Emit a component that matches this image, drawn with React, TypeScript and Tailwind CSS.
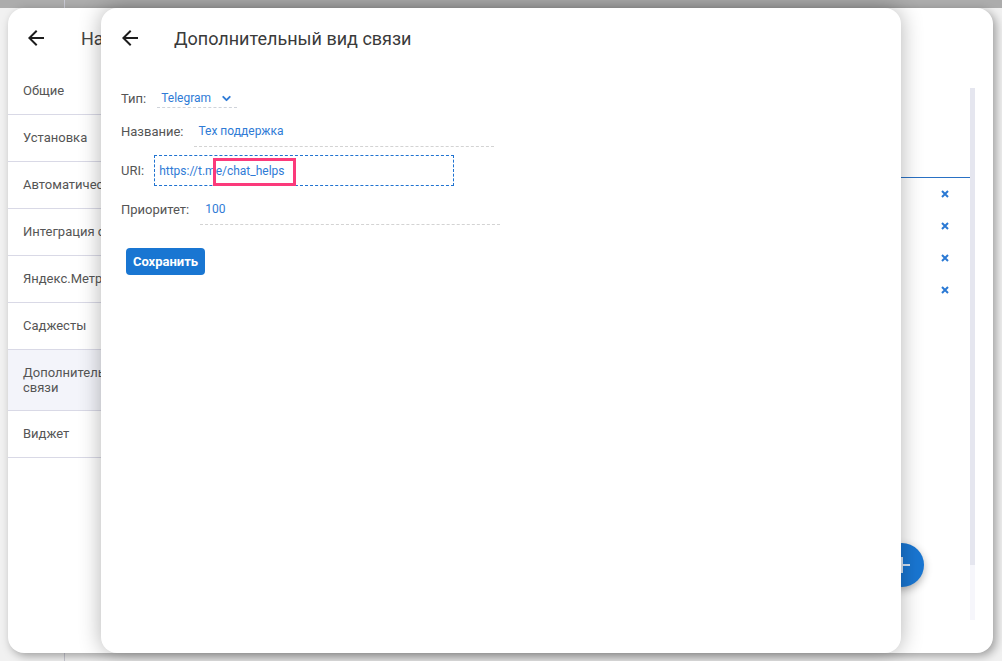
import { ChevronDown } from "lucide-react";

// Two stacked settings dialogs: "Настройки" behind, "Дополнительный вид связи" on top.

const SIDEBAR = [
  "Общие",
  "Установка",
  "Автоматические сообщения",
  "Интеграция с CRM",
  "Яндекс.Метрика",
  "Саджесты",
  "Дополнительные виды связи",
  "Виджет",
];

function ArrowBack({ className }: { className?: string }) {
  return (
    <svg viewBox="0 0 24 24" className={className} fill="currentColor">
      <path d="M20 11H7.83l5.59-5.59L12 4l-8 8 8 8 1.41-1.41L7.83 13H20v-2z" />
    </svg>
  );
}

function CloseMark() {
  return (
    <svg viewBox="0 0 8 8" className="w-[8px] h-[8px]" stroke="#2a79d4" strokeWidth="2">
      <path d="M1 1l6 6M7 1L1 7" />
    </svg>
  );
}

export default function App() {
  return (
    <div
      className="relative w-[1002px] h-[661px] overflow-hidden bg-[#f1f1f1]"
      style={{ fontFamily: "Roboto, 'Noto Sans', Arial, sans-serif" }}
    >
      {/* underlying page */}
      <div className="h-[8px] bg-[#acacac]" />
      <div className="absolute left-[64px] top-0 bottom-0 w-px bg-[#c8c8d2]" />

      {/* back dialog */}
      <div className="absolute left-[8px] top-[8px] w-[985px] h-[645px] bg-white rounded-[16px] shadow-[3px_3px_10px_rgba(0,0,0,0.35)] flex flex-col overflow-hidden">
        <div className="h-[60px] shrink-0 flex items-center pl-[16px]">
          <ArrowBack className="w-[24px] h-[24px] text-[#1d1d1d]" />
          <h2 className="ml-[33px] text-[18px] text-[#444]">Настройки</h2>
        </div>
        <div className="flex flex-1 min-h-0">
          <nav className="w-[280px] shrink-0 flex flex-col">
            {SIDEBAR.map((item) => {
              const active = item === "Дополнительные виды связи";
              return (
                <div
                  key={item}
                  className={
                    active
                      ? "h-[61px] flex items-center pl-[15px] pr-[120px] border-b border-[#d9d9e6] bg-[#f3f4fa] text-[13px] leading-[15px] text-[#555]"
                      : "h-[47px] flex items-center pl-[15px] border-b border-[#d9d9e6] text-[13px] text-[#555]"
                  }
                >
                  {item}
                </div>
              );
            })}
          </nav>
          <main className="relative flex-1 flex pt-[20px] pr-[18px] pb-[33px]">
            <div className="flex-1 flex flex-col">
              <div className="h-[90px] border-b border-[#2a71c4]" />
              {[0, 1, 2, 3].map((i) => (
                <div key={i} className="h-[32px] flex items-center justify-end pr-[21px]">
                  <CloseMark />
                </div>
              ))}
            </div>
            <div className="w-[5px] flex flex-col">
              <div className="h-[477px] bg-[#e5e6ef]" />
              <div className="flex-1 bg-[#f6f6fb]" />
            </div>
            <button className="absolute right-[69px] bottom-[66px] w-[44px] h-[44px] rounded-full bg-[#1976d2] shadow-[0_3px_8px_rgba(0,0,0,0.3)] flex items-center justify-center">
              <svg viewBox="0 0 24 24" className="w-[24px] h-[24px]" stroke="#d6e4f4" strokeWidth="2">
                <path d="M12 4v16M4 12h16" />
              </svg>
            </button>
          </main>
        </div>
      </div>

      {/* front dialog */}
      <div className="absolute left-[101px] top-[8px] w-[800px] h-[645px] bg-white rounded-[16px] shadow-[0_0_22px_rgba(0,0,0,0.3)] flex flex-col">
        <div className="h-[60px] shrink-0 flex items-center pl-[17px]">
          <ArrowBack className="w-[24px] h-[24px] text-[#1d1d1d]" />
          <h2 className="ml-[32px] text-[18px] text-[#3a3a3a]">Дополнительный вид связи</h2>
        </div>

        <div className="pl-[20px] pt-[21px] flex flex-col items-start text-[13px]">
          <div className="flex items-center h-[19px]">
            <span className="text-[#555]">Тип:</span>
            <div className="ml-[11px] h-[19px] flex items-center pl-[4px] pr-[4px] border-b border-dashed border-[#cfd3da] text-[12px] text-[#2f7bd6]">
              <span>Telegram</span>
              <ChevronDown className="ml-[9px] w-[13px] h-[13px]" strokeWidth={3.5} />
            </div>
          </div>

          <div className="mt-[8px] flex items-center">
            <span className="text-[#555]">Название:</span>
            <div className="ml-[10px] w-[300px] h-[31px] flex items-center pl-[5px] border-b border-dashed border-[#d3d3d3] text-[12px] text-[#2f7bd6]">
              Тех поддержка
            </div>
          </div>

          <div className="mt-[8px] flex items-center">
            <span className="text-[#555]">URI:</span>
            <div className="relative ml-[10px] w-[300px] h-[31px] flex items-center pl-[4px] border border-dashed border-[#1f72d0] text-[12px] text-[#2f7bd6]">
              https://t.me/chat_helps
              <div className="absolute left-[58px] top-[2px] w-[83px] h-[28px] border-[3px] border-[#fb3a7b]" />
            </div>
          </div>

          <div className="mt-[8px] flex items-center">
            <span className="text-[#555]">Приоритет:</span>
            <div className="ml-[11px] w-[300px] h-[31px] flex items-center pl-[5px] border-b border-dashed border-[#d3d3d3] text-[12px] text-[#2f7bd6]">
              100
            </div>
          </div>

          <button className="mt-[23px] ml-[5px] w-[79px] h-[27px] rounded-[4px] bg-[#1976d2] text-white text-[13px] font-bold">
            Сохранить
          </button>
        </div>
      </div>
    </div>
  );
}
